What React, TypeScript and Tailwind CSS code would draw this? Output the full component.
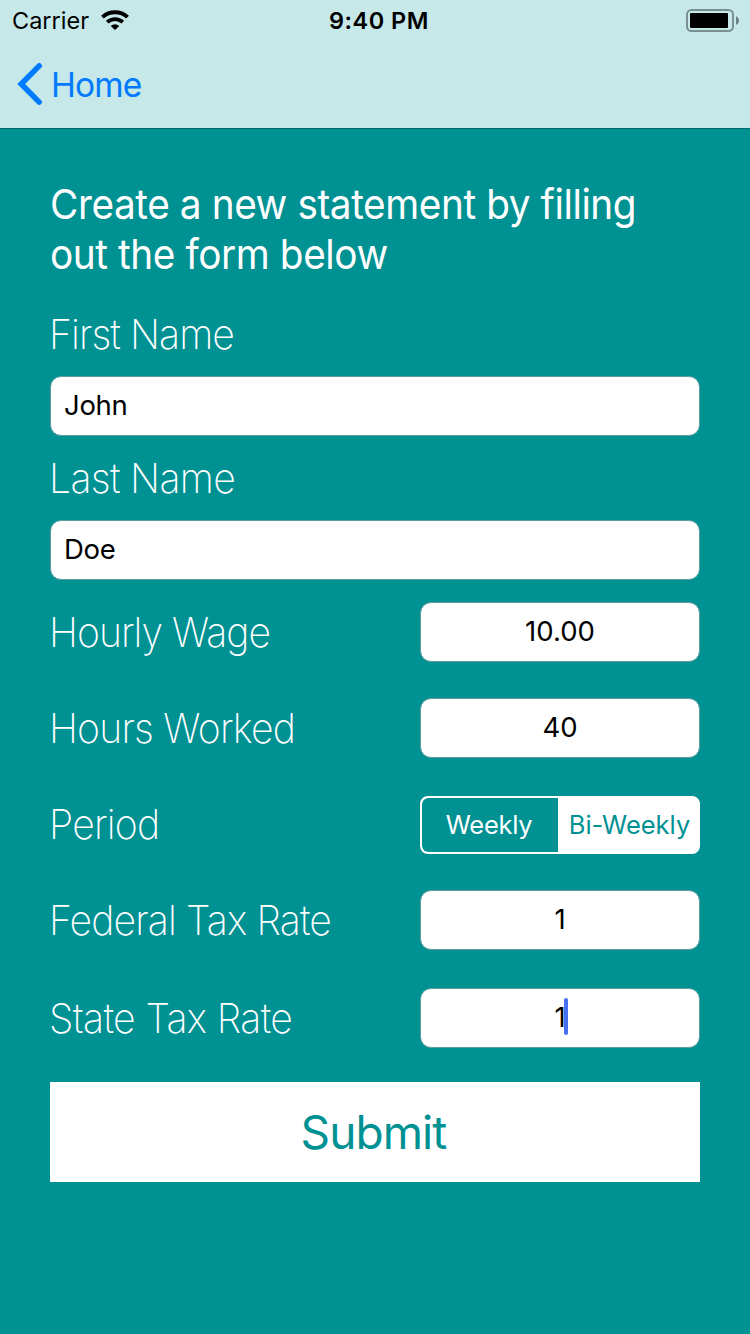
import type { ReactNode } from "react";

function WifiIcon() {
  return (
    <svg width="28" height="20" viewBox="0 0 28 20" className="mb-0.5 shrink-0">
      <g fill="none" stroke="#000" strokeWidth="3.9">
        <path d="M1.4 7.1 A18.6 18.6 0 0 1 26.6 7.1" />
        <path d="M6.2 12.1 A11.6 11.6 0 0 1 21.8 12.1" />
      </g>
      <path d="M14 20 L9.7 15.9 A6.2 6.2 0 0 1 18.3 15.9 Z" fill="#000" />
    </svg>
  );
}

function BatteryIcon() {
  return (
    <svg width="54" height="24" viewBox="0 0 54 24">
      <rect x="1" y="1" width="46" height="21" rx="4.5" fill="none" stroke="#7a9090" strokeWidth="2" />
      <rect x="4" y="4" width="38" height="15" rx="1" fill="#000" />
      <path d="M50 7.2 C54 8.6 54 14.4 50 15.8 Z" fill="#6d8080" />
    </svg>
  );
}

function Label({ children, spacing }: { children: ReactNode; spacing: string }) {
  return (
    <span className={`-ml-px block origin-left scale-x-[0.955] whitespace-nowrap text-[41px] leading-12 font-[160] ${spacing}`}>
      {children}
    </span>
  );
}

function Field({ children, className }: { children: ReactNode; className: string }) {
  return (
    <div className={`flex h-15 items-center rounded-[11px] border border-[#5c9c9d] bg-white text-[27.5px] text-black ${className}`}>
      {children}
    </div>
  );
}

export default function App() {
  return (
    <div className="flex h-[1334px] w-[750px] flex-col overflow-hidden bg-[#009193] font-['Inter',sans-serif] text-white">
      <header className="h-[129px] border-b border-[#00696b] bg-[#c6e8e9] pt-px text-black">
        <div className="grid h-10 grid-cols-3 items-center">
          <div className="flex items-center gap-3 pl-3">
            <span className="text-[23.5px] leading-10">Carrier</span>
            <WifiIcon />
          </div>
          <div className="pl-[79px] text-[23.5px] leading-10 font-[560] tracking-[0.5px] whitespace-nowrap">9:40 PM</div>
          <div className="flex justify-end pr-[10px]">
            <BatteryIcon />
          </div>
        </div>
        <div className="flex h-[87px] items-center gap-2 pl-[17px] text-[#007aff]">
          <svg width="26" height="44" viewBox="0 0 26 44" fill="none" stroke="#007aff" strokeWidth="5.6" strokeLinecap="round" strokeLinejoin="miter">
            <path d="M22.2 2.9 L4.2 21 L22.2 39.1" />
          </svg>
          <span className="text-[33.5px] leading-10 tracking-[-0.9px]">Home</span>
        </div>
      </header>

      <main className="flex flex-col px-[50px] pt-[50px]">
        <h1 className="origin-left scale-x-[0.945] text-[41px] leading-[50px] font-normal tracking-[-0.44px] whitespace-nowrap">
          Create a new statement by filling
          <br />
          out the form below
        </h1>

        <div className="mt-[31px]">
          <Label spacing="tracking-[-0.95px]">First Name</Label>
        </div>
        <Field className="mt-[18px] pl-[13px] tracking-[-0.3px]">John</Field>

        <div className="mt-[18px]">
          <Label spacing="tracking-[-0.7px]">Last Name</Label>
        </div>
        <Field className="mt-[18px] pl-[13px] tracking-[-0.3px]">Doe</Field>

        <div className="mt-[22px] flex justify-between">
          <div className="pt-[6px]"><Label spacing="tracking-[-1px]">Hourly Wage</Label></div>
          <Field className="w-[280px] justify-center">10.00</Field>
        </div>

        <div className="mt-9 flex justify-between">
          <div className="pt-[6px]"><Label spacing="tracking-[-0.8px]">Hours Worked</Label></div>
          <Field className="w-[280px] justify-center">40</Field>
        </div>

        <div className="mt-[38px] flex justify-between">
          <div className="pt-1"><Label spacing="tracking-[-0.8px]">Period</Label></div>
          <div className="flex h-[58px] w-[280px] overflow-hidden rounded-lg border-2 border-white bg-white text-[25.5px]">
            <div className="flex w-[136px] items-center justify-center rounded-l-[6px] bg-[#009193] pr-[2px] tracking-[-0.3px]">Weekly</div>
            <div className="flex flex-1 items-center justify-center pl-[3px] text-[#009193]">Bi-Weekly</div>
          </div>
        </div>

        <div className="mt-9 flex justify-between">
          <div className="pt-[6px]"><Label spacing="tracking-[-0.9px]">Federal Tax Rate</Label></div>
          <Field className="w-[280px] justify-center">1</Field>
        </div>

        <div className="mt-[38px] flex justify-between">
          <div className="pt-[6px]"><Label spacing="tracking-[-0.65px]">State Tax Rate</Label></div>
          <Field className="w-[280px] justify-center">
            <span className="relative">
              1
              <span className="absolute top-px left-[10px] h-[37px] w-1 rounded-full bg-[#476ff0]" />
            </span>
          </Field>
        </div>

        <button className="mt-[34px] h-[100px] bg-white pr-[3px] text-[46px] leading-[100px] tracking-[-0.9px] text-[#009193]">Submit</button>
      </main>
    </div>
  );
}
